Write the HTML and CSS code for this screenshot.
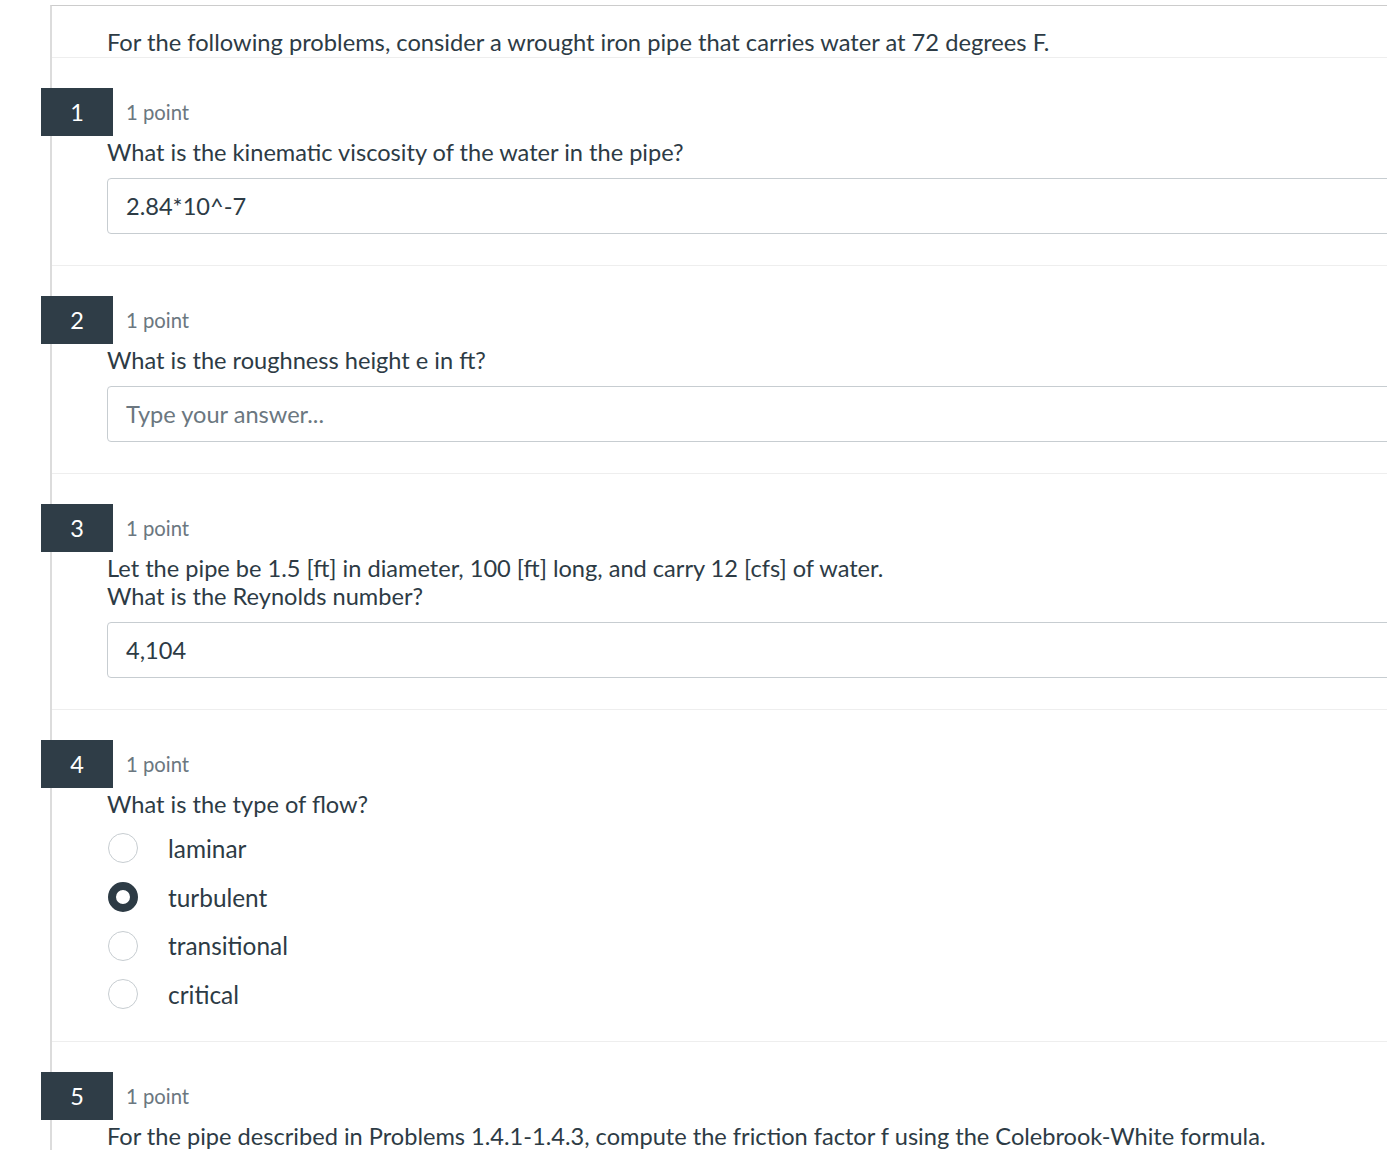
FILE: index.html
```html
<!DOCTYPE html>
<html lang="en">
<head>
<meta charset="utf-8">
<title>Quiz</title>
<link rel="stylesheet" href="styles.css">
</head>
<body>
<div class="page">
  <div class="intro">For the following problems, consider a wrought iron pipe that carries water at 72 degrees F.</div>

  <section class="question">
    <div class="qhead"><span class="badge">1</span><span class="points">1 point</span></div>
    <div class="qtext">What is the kinematic viscosity of the water in the pipe?</div>
    <div class="answer">2.84*10^-7</div>
  </section>

  <section class="question">
    <div class="qhead"><span class="badge">2</span><span class="points">1 point</span></div>
    <div class="qtext">What is the roughness height e in ft?</div>
    <div class="answer placeholder">Type your answer...</div>
  </section>

  <section class="question">
    <div class="qhead"><span class="badge">3</span><span class="points">1 point</span></div>
    <div class="qtext">Let the pipe be 1.5 [ft] in diameter, 100 [ft] long, and carry 12 [cfs] of water.<br>What is the Reynolds number?</div>
    <div class="answer">4,104</div>
  </section>

  <section class="question q-radio">
    <div class="qhead"><span class="badge">4</span><span class="points">1 point</span></div>
    <div class="qtext">What is the type of flow?</div>
    <div class="options">
      <div class="option"><span class="radio"></span><span class="label">laminar</span></div>
      <div class="option"><span class="radio checked"></span><span class="label">turbulent</span></div>
      <div class="option"><span class="radio"></span><span class="label">transitional</span></div>
      <div class="option"><span class="radio"></span><span class="label">critical</span></div>
    </div>
  </section>

  <section class="question">
    <div class="qhead"><span class="badge">5</span><span class="points">1 point</span></div>
    <div class="qtext">For the pipe described in Problems 1.4.1-1.4.3, compute the friction factor f using the Colebrook-White formula.</div>
  </section>
</div>
</body>
</html>
```

FILE: styles.css
```css
html, body {
  margin: 0;
  padding: 0;
  overflow: hidden;
  background: #ffffff;
}

body {
  font-family: Lato, "Open Sans", sans-serif;
  color: #2d3b45;
}

.page {
  margin-top: 5px;
  margin-left: 50px;
  width: 1400px;
  border-top: 1px solid #cccccc;
  border-left: 2px solid #dcdcdc;
  min-height: 1200px;
}

.intro {
  padding: 22px 0 0 55px;
  font-size: 23.7px;
  line-height: 29px;
  border-bottom: 1px solid #eeeeee;
}

.question {
  padding: 30px 0 31px 55px;
  border-bottom: 1px solid #eeeeee;
}

.q-radio {
  padding-bottom: 22px;
}

.qhead {
  display: flex;
  align-items: center;
  height: 48px;
}

.badge {
  display: flex;
  align-items: center;
  justify-content: center;
  width: 72px;
  height: 48px;
  margin-left: -66px;
  background: #2f3d47;
  color: #ffffff;
  font-size: 23.5px;
}

.points {
  margin-left: 13px;
  font-size: 20.3px;
  color: #6b7780;
}

.qtext {
  margin-top: 2px;
  font-size: 23.6px;
  line-height: 28px;
}

.answer {
  margin-top: 12px;
  height: 54px;
  box-sizing: content-box;
  border: 1px solid #c7cdd1;
  border-radius: 4px;
  padding-left: 18px;
  display: flex;
  align-items: center;
  font-size: 23.6px;
  color: #2d3b45;
}

.answer.placeholder {
  color: #6b7780;
}

.options {
  margin-top: 6px;
  display: flex;
  flex-direction: column;
}

.option {
  display: flex;
  align-items: center;
  height: 48.7px;
}

.radio {
  width: 30px;
  height: 30px;
  box-sizing: border-box;
  border: 1px solid #c7cdd1;
  border-radius: 50%;
  margin-left: 1px;
  background: #ffffff;
}

.radio.checked {
  border: 8px solid #2d3b45;
}

.label {
  margin-left: 30px;
  font-size: 24.4px;
}
```
